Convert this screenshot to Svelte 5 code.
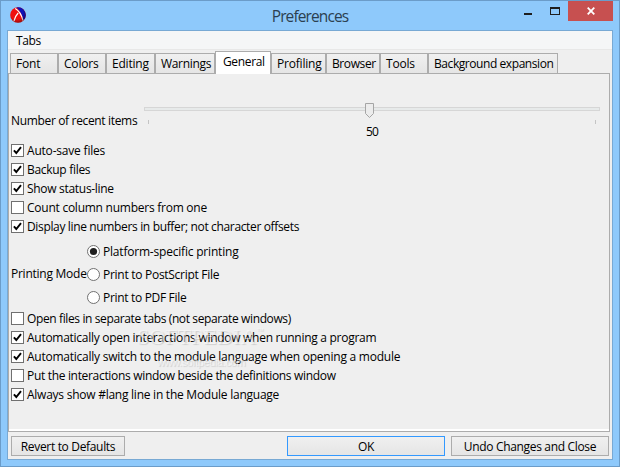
<script lang="ts">
  type Tab = { label: string; width: number; tracking?: number };
  type Option = { label: string; checked: boolean; tracking?: number };

  const tabs: Tab[] = [
    { label: 'Font', width: 48 },
    { label: 'Colors', width: 48 },
    { label: 'Editing', width: 49 },
    { label: 'Warnings', width: 60, tracking: -0.32 },
    { label: 'General', width: 56, tracking: -0.35 },
    { label: 'Profiling', width: 55 },
    { label: 'Browser', width: 54, tracking: -0.4 },
    { label: 'Tools', width: 48 },
    { label: 'Background expansion', width: 130, tracking: -0.43 },
  ];

  let activeTab = $state('General');
  let printingMode = $state('Platform-specific printing');

  let fileOptions: Option[] = $state([
    { label: 'Auto-save files', checked: true },
    { label: 'Backup files', checked: true, tracking: -0.3 },
    { label: 'Show status-line', checked: true, tracking: -0.3 },
    { label: 'Count column numbers from one', checked: false, tracking: -0.25 },
    { label: 'Display line numbers in buffer; not character offsets', checked: true, tracking: -0.35 },
  ]);

  let windowOptions: Option[] = $state([
    { label: 'Open files in separate tabs (not separate windows)', checked: false, tracking: -0.38 },
    { label: 'Automatically open interactions window when running a program', checked: true, tracking: -0.28 },
    { label: 'Automatically switch to the module language when opening a module', checked: true, tracking: -0.24 },
    { label: 'Put the interactions window beside the definitions window', checked: false, tracking: -0.32 },
    { label: 'Always show #lang line in the Module language', checked: true, tracking: -0.25 },
  ]);

  const printingModes = [
    { label: 'Platform-specific printing', tracking: -0.2 },
    { label: 'Print to PostScript File', tracking: -0.28 },
    { label: 'Print to PDF File', tracking: -0.32 },
  ];
</script>

{#snippet checkList(options: Option[])}
  <div class="checks">
    {#each options as option (option.label)}
      <button class="check" role="checkbox" aria-checked={option.checked} onclick={() => (option.checked = !option.checked)}>
        <svg width="13" height="13" viewBox="0 0 13 13">
          <rect x="0.5" y="0.5" width="12" height="12" fill="#fff" stroke="#707070" />
          {#if option.checked}
            <path d="M2.9 6.3L5.3 9L10 3.1" fill="none" stroke="#000" stroke-width="1.9" />
          {/if}
        </svg>
        <span style="letter-spacing: {option.tracking ?? -0.2}px">{option.label}</span>
      </button>
    {/each}
  </div>
{/snippet}

<div class="window">
  <header>
    <svg class="logo" width="16" height="16" viewBox="0 0 16 16">
      <defs>
        <radialGradient id="shade" cx="42%" cy="38%" r="65%">
          <stop offset="60%" stop-color="#000" stop-opacity="0" />
          <stop offset="100%" stop-color="#000" stop-opacity="0.4" />
        </radialGradient>
      </defs>
      <circle cx="8" cy="8" r="7.8" fill="#f01010" />
      <path d="M6.5 0.4A7.8 7.8 0 0 1 13.6 13.3C12.3 8.5 10.5 3.8 6.5 0.4z" fill="#1010b8" />
      <path d="M5.2 1.5C9 3.5 11.7 8.5 13 13.6M8.2 6C6.2 8 4.8 10.8 4 14" fill="none" stroke="#fff" stroke-width="1.2" />
      <circle cx="8" cy="8" r="7.8" fill="url(#shade)" />
    </svg>
    <h1>Preferences</h1>
    <div class="controls">
      <button class="minimize" aria-label="Minimize">
        <svg width="8" height="2"><rect width="8" height="2" fill="#1e1e1e" /></svg>
      </button>
      <button class="maximize" aria-label="Maximize">
        <svg width="10" height="8" viewBox="0 0 10 8">
          <path d="M0 0h10v8H0zM1 2v5h8V2z" fill="#1e1e1e" fill-rule="evenodd" />
        </svg>
      </button>
      <button class="close" aria-label="Close">
        <svg width="8" height="8" viewBox="0 0 8 8">
          <path d="M0.7 0.7l6.6 6.6M7.3 0.7L0.7 7.3" stroke="#fff" stroke-width="1.8" />
        </svg>
      </button>
    </div>
  </header>

  <main>
    <nav>Tabs</nav>

    <div class="tabs" role="tablist">
      {#each tabs as tab (tab.label)}
        <button
          class="tab"
          class:active={activeTab === tab.label}
          role="tab"
          aria-selected={activeTab === tab.label}
          style="width: {tab.width}px; letter-spacing: {tab.tracking ?? -0.2}px"
          onclick={() => (activeTab = tab.label)}
        >{tab.label}</button>
      {/each}
    </div>

    <section class="panel">
      <div class="recent">
        <span class="recent-label">Number of recent items</span>
        <div class="slider">
          <div class="track">
            <svg class="thumb" width="9" height="15" viewBox="0 0 9 15">
              <path d="M0.5 0.5h8v10l-4 4l-4-4z" fill="#ececec" stroke="#a5a5a5" />
            </svg>
          </div>
          <div class="ticks"><i></i><i></i></div>
          <div class="value">50</div>
        </div>
      </div>

      {@render checkList(fileOptions)}

      <div class="printing">
        <span class="printing-label">Printing Mode</span>
        <div class="radios" role="radiogroup">
          {#each printingModes as mode (mode.label)}
            <button
              class="radio"
              role="radio"
              aria-checked={printingMode === mode.label}
              onclick={() => (printingMode = mode.label)}
            >
              <svg width="13" height="13" viewBox="0 0 13 13">
                <circle cx="6.5" cy="6.5" r="6" fill="#fff" stroke="#707070" />
                {#if printingMode === mode.label}
                  <circle cx="6.5" cy="6.5" r="3.6" fill="#1e1e1e" />
                {/if}
              </svg>
              <span style="letter-spacing: {mode.tracking}px">{mode.label}</span>
            </button>
          {/each}
        </div>
      </div>

      {@render checkList(windowOptions)}
    </section>

    <footer>
      <button class="push revert">Revert to Defaults</button>
      <button class="push ok">OK</button>
      <button class="push undo">Undo Changes and Close</button>
    </footer>
  </main>

  <div class="watermark" aria-hidden="true">
    <div class="brand">SOFTPEDIA<sup>™</sup></div>
    <div class="site">www.softpedia.com</div>
  </div>
</div>

<style>
  :global(body) {
    margin: 0;
  }

  .window {
    position: relative;
    display: flex;
    flex-direction: column;
    box-sizing: border-box;
    width: 620px;
    height: 467px;
    padding: 0 6px 6px;
    border: 1px solid #6b9cc9;
    background: #8ec9fb;
    color: #000;
    font: 12px/15px 'Open Sans', 'Noto Sans', sans-serif;
    letter-spacing: -0.2px;
    white-space: nowrap;
  }

  button {
    margin: 0;
    padding: 0;
    border: 0;
    background: none;
    color: inherit;
    font: inherit;
    letter-spacing: inherit;
  }

  svg {
    display: block;
    flex: none;
  }

  header {
    display: grid;
    grid-template-columns: 99px 1fr 99px;
    height: 29px;
  }

  .logo {
    margin: 6px 0 0 3px;
  }

  h1 {
    margin: 4px 0 0;
    color: #2b3f50;
    font-size: 15.5px;
    font-weight: 400;
    line-height: 22px;
    letter-spacing: -0.9px;
    text-align: center;
  }

  .controls {
    display: flex;
    align-items: flex-start;
  }

  .minimize {
    margin: 12px 18px 0 10px;
  }

  .maximize {
    margin: 6px 8px 0 0;
  }

  .close {
    display: flex;
    align-items: center;
    justify-content: center;
    width: 45px;
    height: 20px;
    background: #c75050;
  }

  main {
    display: flex;
    flex: 1;
    flex-direction: column;
    border: 1px solid #78a9d4;
    background: #efefef;
  }

  nav {
    height: 18px;
    padding-left: 8px;
    border-bottom: 1px solid #e8e8e8;
    background: #f5f6f7;
    line-height: 19px;
    letter-spacing: -0.4px;
  }

  .tabs {
    display: flex;
    align-items: flex-end;
    height: 23px;
    padding-left: 2px;
  }

  .tab {
    box-sizing: border-box;
    height: 20px;
    padding: 0 0 0 5px;
    border: 1px solid #acacac;
    border-bottom: 0;
    background: linear-gradient(#f0f0f0, #e5e5e5);
    text-align: left;
  }

  .tab.active {
    z-index: 1;
    height: 23px;
    margin-bottom: -1px;
    padding: 0 0 3px 7px;
    background: #fff;
  }

  .panel {
    box-sizing: border-box;
    width: 602px;
    height: 359px;
    padding: 29px 9px 0 2px;
    border: 1px solid #acacac;
    box-shadow: inset 0 -2px #fff;
  }

  .recent {
    display: flex;
    justify-content: space-between;
    height: 38px;
  }

  .recent-label {
    margin-top: 10px;
    letter-spacing: -0.34px;
  }

  .slider {
    width: 456px;
    padding-top: 4px;
  }

  .track {
    box-sizing: border-box;
    height: 4px;
    border: 1px solid #d6d6d6;
    background: #e7eaea;
  }

  .thumb {
    position: relative;
    top: -5px;
    left: 220px;
  }

  .ticks {
    display: flex;
    justify-content: space-between;
    padding: 9px 4px 0;
  }

  .ticks i {
    width: 1px;
    height: 4px;
    background: #c4c4c4;
  }

  .value {
    padding-left: 222px;
    letter-spacing: -0.9px;
  }

  .checks {
    display: flex;
    flex-direction: column;
  }

  .check {
    display: flex;
    align-items: center;
    gap: 3px;
    height: 19px;
  }

  .printing {
    display: flex;
    align-items: center;
    box-sizing: border-box;
    height: 73px;
    padding-top: 4px;
  }

  .printing-label {
    width: 76px;
    margin-bottom: 3px;
    letter-spacing: -0.25px;
  }

  .radio {
    display: flex;
    align-items: center;
    gap: 3px;
    height: 23px;
  }

  footer {
    display: flex;
    padding: 4px 3px 0;
  }

  .push {
    box-sizing: border-box;
    height: 20px;
    border: 1px solid #acacac;
    background: linear-gradient(#f0f0f0, #e5e5e5);
    line-height: 17px;
    letter-spacing: -0.33px;
  }

  .revert {
    width: 114px;
  }

  .ok {
    width: 158px;
    margin: 0 6px 0 auto;
    border-color: #3399ff;
  }

  .undo {
    width: 158px;
  }

  .watermark {
    position: absolute;
    top: 323px;
    left: 136px;
    color: rgba(255, 255, 255, 0.5);
    text-shadow: 1px 1px 1px rgba(0, 0, 0, 0.14);
    pointer-events: none;
  }

  .brand {
    font: 22px/26px 'Liberation Serif', serif;
    letter-spacing: 0.1px;
  }

  .brand sup {
    font-size: 7px;
    line-height: 0;
    vertical-align: 11px;
  }

  .site {
    padding: 4px 0 0 20px;
    font: 11px/16px 'Liberation Sans', sans-serif;
    letter-spacing: -0.4px;
  }
</style>
